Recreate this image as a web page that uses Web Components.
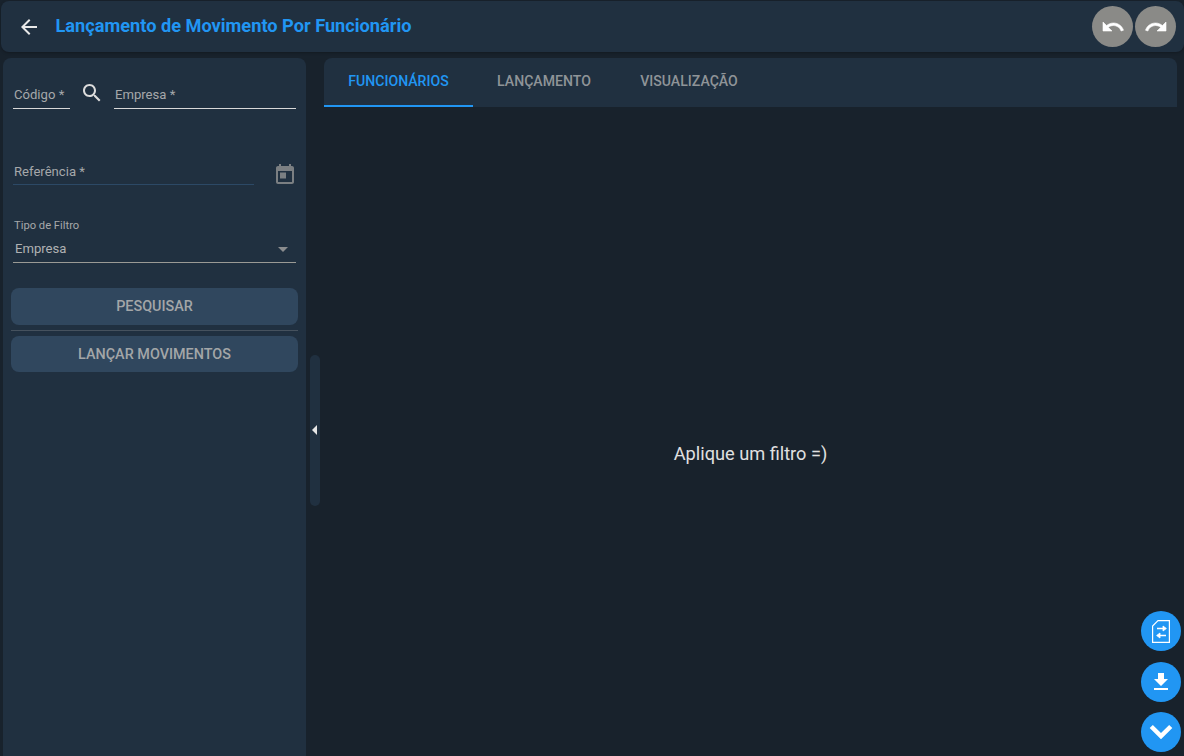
<!DOCTYPE html>
<html lang="pt"><head><meta charset="utf-8"><title>Lançamento</title>
<style>
html,body{margin:0;height:756px;overflow:hidden;background:#18222c;font-family:Roboto,"Liberation Sans",sans-serif;color:#fff}
</style></head><body>
<app-shell>
  <app-header slot="header" title-text="Lançamento de Movimento Por Funcionário"></app-header>
  <filter-panel slot="side"></filter-panel>
  <split-handle slot="split"></split-handle>
  <tab-view slot="main"></tab-view>
</app-shell>
<fab-stack></fab-stack>
<script>
function def(name,html,init){customElements.define(name,class extends HTMLElement{constructor(){super();this.attachShadow({mode:'open'}).innerHTML=typeof html==='function'?html(this):html;}connectedCallback(){if(init)init(this)}})}

def('app-shell',`<style>
:host{display:flex;flex-direction:column;height:756px;box-sizing:border-box;padding-top:1px}
.row{flex:1;min-height:0;display:flex;padding:6px 7px 0 3px}
.side{display:flex;width:303px;flex:none}
.split{display:flex;width:18px;flex:none;align-items:center}
.main{flex:1;min-width:0;display:flex}
</style>
<slot name="header"></slot>
<div class="row"><div class="side"><slot name="side"></slot></div><div class="split"><slot name="split"></slot></div><div class="main"><slot name="main"></slot></div></div>`);

def('app-header',el=>`<style>
:host{display:flex;align-items:center;height:51px;box-sizing:border-box;margin-left:1px;background:#203040;border-radius:8px;padding:0 8px 0 16px;box-shadow:0 1px 3px rgba(0,0,0,.25)}
svg.back{width:24px;height:24px;fill:#e8e8e8;flex:none}
h1{margin:-2px 0 0 14.5px;font:700 18.2px/20px Roboto,sans-serif;color:#2196f3;flex:1;white-space:nowrap}
.btn{width:41px;height:41px;border-radius:50%;background:#8a8a87;display:flex;align-items:center;justify-content:center;margin-left:2px}
.btn svg{width:24px;height:24px;fill:#fff;stroke:#fff;stroke-width:.6}
</style>
<svg class="back" viewBox="0 0 24 24"><path d="M20 11H7.83l5.59-5.59L12 4l-8 8 8 8 1.41-1.41L7.83 13H20v-2z"/></svg>
<h1>${el.getAttribute('title-text')}</h1>
<div class="btn"><svg viewBox="0 0 24 24"><path d="M12.5 8c-2.65 0-5.05.99-6.9 2.6L2 7v9h9l-3.62-3.62c1.39-1.16 3.16-1.88 5.12-1.88 3.54 0 6.55 2.31 7.6 5.5l2.37-.78C21.08 11.03 17.15 8 12.5 8z"/></svg></div>
<div class="btn"><svg viewBox="0 0 24 24"><path d="M18.4 10.6C16.55 8.99 14.15 8 11.5 8c-4.65 0-8.58 3.03-9.96 7.22L3.9 16c1.05-3.19 4.05-5.5 7.6-5.5 1.95 0 3.73.72 5.12 1.88L13 16h9V7l-3.6 3.6z"/></svg></div>`);

def('text-field',el=>`<style>
:host{display:flex;flex-direction:column;justify-content:flex-end;min-width:0;box-sizing:border-box;height:24px;border-bottom:1px solid var(--line,#d8d8d8);font:13.1px/16px Roboto,sans-serif;color:#a6a8aa;padding:0 0 var(--pb,5px) 1px}
</style><slot></slot>`);

def('filter-panel',`<style>
:host{display:block;flex:1;background:#203040;border-radius:8px 8px 0 0;box-sizing:border-box;padding:27px 8px 0}
.r1{display:flex;align-items:flex-end;padding:0 2px;height:24px}
.search{width:44px;flex:none;display:flex;justify-content:center;align-self:flex-start;}
.search svg{width:24px;height:24px;fill:#dcdcdc;margin-top:-4px}
.grow{flex:1}
.r2{display:flex;padding:0 2px;margin-top:52px;align-items:flex-end}
.cal{width:42px;flex:none;display:flex;justify-content:flex-end}
.cal svg{width:24px;height:24px;margin-bottom:-2px;margin-right:-1px}
.sel{margin:33px 2px 0;border-bottom:1px solid #9a9a95;height:45px;box-sizing:border-box;display:flex;flex-direction:column;padding-top:1px}
.sel label{font:11.2px/13px Roboto,sans-serif;color:#a6a8aa;padding-left:1px}
.val{display:flex;align-items:center;justify-content:space-between;font:13.1px/16px Roboto,sans-serif;color:#b0b2b3;padding:9px 8px 0 2px}
.arrow{width:0;height:0;border:5px solid transparent;border-top-color:#8a8c8e;border-bottom:0}
.b{display:block;margin-top:25px}
.rule{height:1px;background:#46525e;margin:5px 0}
</style>
<div class="r1"><text-field style="width:57px">Código *</text-field>
<div class="search"><svg viewBox="0 0 24 24"><path d="M15.5 14h-.79l-.28-.27C15.41 12.59 16 11.11 16 9.5 16 5.91 13.09 3 9.5 3S3 5.91 3 9.5 5.91 16 9.5 16c1.61 0 3.09-.59 4.23-1.57l.27.28v.79l5 4.99L20.49 19l-4.99-5zm-6 0C7.01 14 5 11.99 5 9.5S7.01 5 9.5 5 14 7.01 14 9.5 11.99 14 9.5 14z"/></svg></div>
<text-field class="grow">Empresa *</text-field></div>
<div class="r2"><text-field class="grow" style="--line:#2c4966;--pb:4px">Referência *</text-field>
<div class="cal"><svg viewBox="0 0 24 24"><path fill="#7b7f82" fill-rule="evenodd" d="M6 1h2v2h8V1h2v2h1c1.1 0 2 .9 2 2v14c0 1.1-.9 2-2 2H5c-1.1 0-2-.9-2-2V5c0-1.1.9-2 2-2h1zM5 8v11h14V8z"/><rect x="7" y="9.5" width="6" height="6" fill="#7b7f82"/></svg></div></div>
<div class="sel"><label>Tipo de Filtro</label><div class="val"><span>Empresa</span><span class="arrow"></span></div></div>
<action-button class="b">PESQUISAR</action-button>
<div class="rule"></div>
<action-button style="height:36px">LANÇAR MOVIMENTOS</action-button>`);

def('action-button',`<style>
:host{display:block;height:37px;background:#30475e;border-radius:8px;font:500 14.4px/38px Roboto,sans-serif;color:#a3a6a8;text-align:center;margin:0}
</style><slot></slot>`);

def('split-handle',`<style>
:host{display:flex;align-items:center;justify-content:center;width:10px;height:151px;margin:46px 0 0 4px;background:#203040;border-radius:6px}
i{width:0;height:0;border:5px solid transparent;border-right:5px solid #e6e6e6;border-left:0;margin-left:-1px}
</style><i></i>`);

def('tab-view',`<style>
:host{display:flex;flex-direction:column;flex:1;min-width:0}
.tabs{display:flex;height:49px;box-sizing:border-box;background:#203040;border-radius:8px 8px 0 0}
.t{flex:none;box-sizing:border-box;text-align:center;font:500 14.1px/47px Roboto,sans-serif;color:#8f9498;}
.t.on{color:#2196f3;border-bottom:2px solid #2196f3}
.t.t1{width:149px}.t.t2{width:142px}.t.t3{width:148px}
.body{flex:1;display:flex;align-items:center;justify-content:center;font:18.2px/22px Roboto,sans-serif;color:#e0e0e0;padding:44px 0 0 0}
</style>
<div class="tabs"><div class="t t1 on">FUNCIONÁRIOS</div><div class="t t2">LANÇAMENTO</div><div class="t t3">VISUALIZAÇÃO</div></div>
<div class="body"><span>Aplique um filtro =)</span></div>`);

def('fab-stack',`<style>
:host{position:fixed;right:3px;bottom:4px;display:flex;flex-direction:column;gap:11px}
.f{width:40px;height:40px;border-radius:50%;background:#2196f3;display:flex;align-items:center;justify-content:center}
.f svg{fill:#fff}
.f svg.doc{fill:none;stroke:#fff;stroke-width:1.2}
.doc .a{fill:#fff;stroke-width:.8}
</style>
<div class="f"><svg class="doc" width="24" height="24" viewBox="0 0 24 24"><path d="M9 1.6H20.4V23.4H3.6V7z"/><path stroke-width="1.5" d="M8 9.5h7M10 16.5h7"/><path class="a" d="M14 7l3.4 2.5L14 12zM11 14l-3.4 2.5L11 19z"/></svg></div>
<div class="f" style="margin-bottom:-1px"><svg width="24" height="24" viewBox="0 0 24 24"><path d="M19 9h-4V3H9v6H5l7 7 7-7zM5 18v2h14v-2H5z"/></svg></div>
<div class="f"><svg width="28" height="28" viewBox="0 0 24 24"><path d="M2.3 8.6 5 5.9l7 7 7-7 2.7 2.7L12 18.3z"/></svg></div>`);
</script>
</body></html>
